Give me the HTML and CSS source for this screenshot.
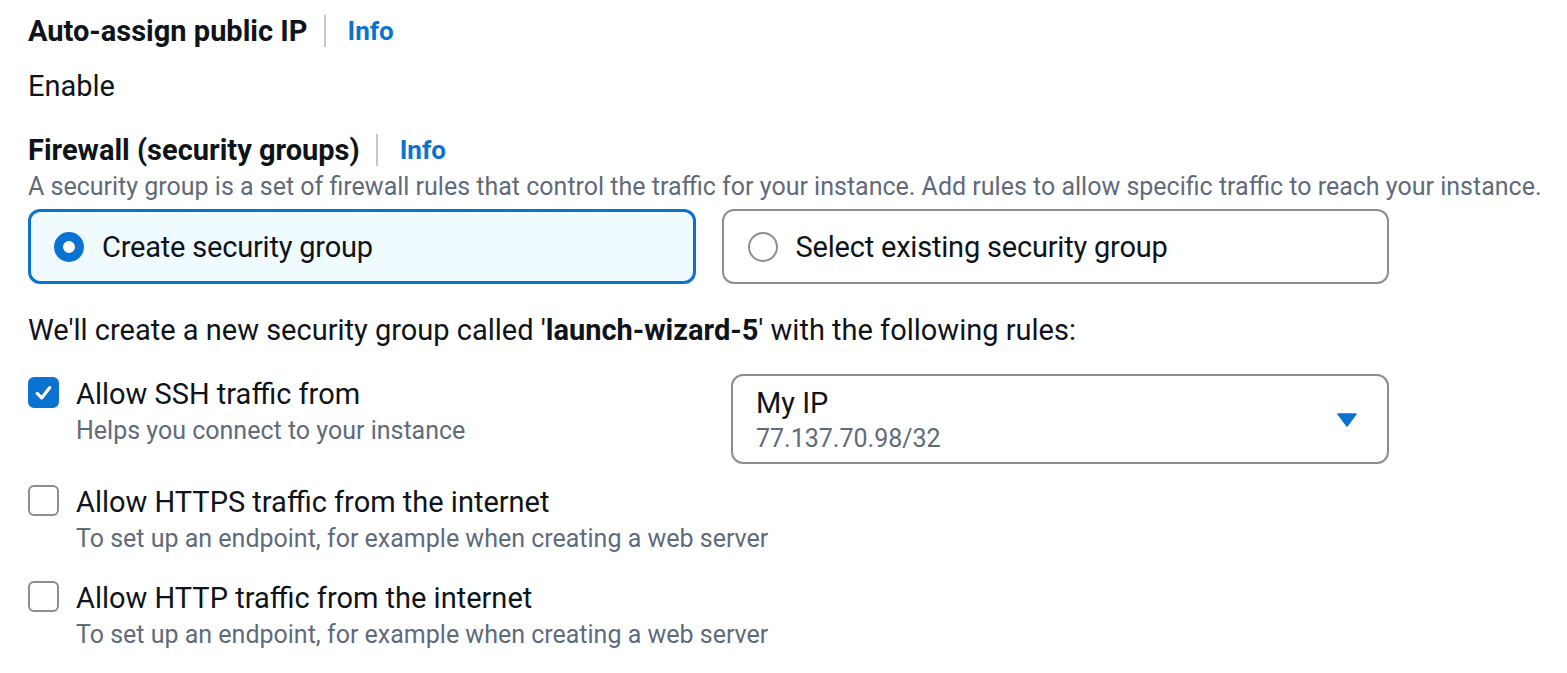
FILE: index.html
```html
<!DOCTYPE html>
<html lang="en">
<head>
<meta charset="utf-8">
<title>Network settings</title>
<link rel="stylesheet" href="styles.css">
</head>
<body>
<div class="page">
  <div class="field-header first">
    <span class="label">Auto-assign public IP</span>
    <span class="divider"></span>
    <a class="info" href="#">Info</a>
  </div>
  <div class="value">Enable</div>

  <div class="field-header fw">
    <span class="label">Firewall (security groups)</span>
    <span class="divider"></span>
    <a class="info" href="#">Info</a>
  </div>
  <div class="field-desc">A security group is a set of firewall rules that control the traffic for your instance. Add rules to allow specific traffic to reach your instance.</div>

  <div class="tiles">
    <div class="tile selected">
      <span class="radio checked"></span>
      <span class="tile-label">Create security group</span>
    </div>
    <div class="tile">
      <span class="radio"></span>
      <span class="tile-label">Select existing security group</span>
    </div>
  </div>

  <p class="intro">We'll create a new security group called '<b>launch-wizard-5</b>' with the following rules:</p>

  <div class="rules">
    <div class="rule rule-ssh">
      <div class="check-item">
        <span class="checkbox checked">
          <svg viewBox="0 0 30 30" width="30" height="30"><path d="M8 15.5 L13 20.5 L22 9" fill="none" stroke="#fff" stroke-width="3.6" stroke-linecap="round" stroke-linejoin="round"/></svg>
        </span>
        <div class="check-text">
          <div class="check-label">Allow SSH traffic from</div>
          <div class="check-desc">Helps you connect to your instance</div>
        </div>
      </div>
      <div class="select">
        <div class="select-text">
          <div class="select-value">My IP</div>
          <div class="select-sub">77.137.70.98/32</div>
        </div>
        <svg class="caret" viewBox="0 0 20 14" width="20" height="14"><path d="M1 1 H19 L10 13 Z" fill="#0972d3" stroke="#0972d3" stroke-width="1.5" stroke-linejoin="round"/></svg>
      </div>
    </div>

    <div class="rule">
      <div class="check-item">
        <span class="checkbox"></span>
        <div class="check-text">
          <div class="check-label">Allow HTTPS traffic from the internet</div>
          <div class="check-desc">To set up an endpoint, for example when creating a web server</div>
        </div>
      </div>
    </div>

    <div class="rule rule-http">
      <div class="check-item">
        <span class="checkbox"></span>
        <div class="check-text">
          <div class="check-label">Allow HTTP traffic from the internet</div>
          <div class="check-desc">To set up an endpoint, for example when creating a web server</div>
        </div>
      </div>
    </div>
  </div>
</div>
</body>
</html>
```

FILE: styles.css
```css
* { box-sizing: border-box; }

html, body {
  margin: 0;
  padding: 0;
  background: #ffffff;
}

body {
  font-family: Roboto, "Noto Sans", "Liberation Sans", sans-serif;
  color: #0f141a;
  font-size: 29px;
}

.page {
  width: 1389px;
  padding-left: 28px;
}

.field-header {
  display: flex;
  align-items: center;
  height: 40px;
}

.field-header.first { margin-top: 11px; }
.field-header.fw { margin-top: 24px; }

.label {
  font-weight: 700;
  font-size: 29px;
  line-height: 40px;
}

.divider {
  width: 2px;
  height: 32px;
  background: #c6c6cd;
  margin: 0 22px 0 16px;
}

.info {
  color: #0972d3;
  font-weight: 700;
  font-size: 26px;
  text-decoration: none;
}

.value {
  margin-top: 15px;
  line-height: 40px;
}

.field-desc {
  font-size: 25px;
  line-height: 32px;
  color: #5f6b7a;
  margin-top: 1px;
  white-space: nowrap;
}

.tiles {
  display: grid;
  grid-template-columns: 1fr 1fr;
  column-gap: 26px;
  margin-top: 6px;
}

.tile {
  height: 75px;
  display: flex;
  align-items: center;
  gap: 18px;
  padding-left: 24px;
  border: 2px solid #8c8c94;
  border-radius: 12px;
  background: #ffffff;
}

.tile.selected {
  border: 3px solid #0972d3;
  padding-left: 23px;
  background: #f0fbff;
}

.tile-label {
  line-height: 36px;
  letter-spacing: -0.2px;
}

.radio {
  width: 30px;
  height: 30px;
  border-radius: 50%;
  border: 2px solid #8c8c94;
  background: #fff;
  flex: none;
}

.radio.checked {
  border: 9px solid #0972d3;
}

.intro {
  margin: 28px 0 0;
  line-height: 36px;
}

.intro b { font-weight: 700; }

.rules {
  display: flex;
  flex-direction: column;
  gap: 18px;
  margin-top: 26px;
}

.rule-ssh {
  display: grid;
  grid-template-columns: 677px 658px;
  column-gap: 26px;
  align-items: start;
}

.rule-http { margin-top: 3px; }

.check-item {
  display: flex;
  align-items: flex-start;
  gap: 17px;
}

.checkbox {
  width: 31px;
  height: 31px;
  margin-top: 3px;
  border: 2px solid #8c8c94;
  border-radius: 6px;
  background: #fff;
  flex: none;
  display: flex;
  align-items: center;
  justify-content: center;
}

.checkbox.checked {
  background: #0972d3;
  border-color: #0972d3;
}

.check-label {
  line-height: 38px;
  margin-top: 1px;
}

.check-desc {
  font-size: 25px;
  line-height: 36px;
  color: #5f6b7a;
  white-space: nowrap;
}

.select {
  height: 90px;
  border: 2px solid #8c8c94;
  border-radius: 12px;
  display: flex;
  align-items: center;
  justify-content: space-between;
  padding: 4px 30px 0 23px;
}

.select-value {
  line-height: 36px;
}

.select-sub {
  font-size: 25px;
  line-height: 36px;
  color: #5f6b7a;
}

.caret {
  margin-top: -2px;
}
```
